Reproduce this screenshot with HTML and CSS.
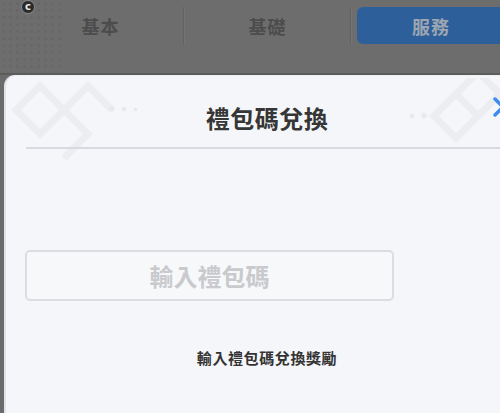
FILE: index.html
```html
<!DOCTYPE html>
<html lang="zh-Hant">
<head>
<meta charset="utf-8">
<link rel="stylesheet" href="styles.css">
</head>
<body>
<div class="screen">
  <div class="topbar">
    <span class="badge">c</span>
    <div class="tabs">
      <div class="tab">基本</div>
      <div class="sep"></div>
      <div class="tab">基礎</div>
      <div class="sep"></div>
      <div class="tab active">服務</div>
    </div>
  </div>
  <div class="modal">
    <svg class="deco deco-left" width="140" height="80" viewBox="0 0 140 80">
      <g fill="none" stroke="#ebedf1" stroke-width="7">
        <path d="M6 30 L30 6 L54 30 L30 54 Z"/>
        <path d="M30 54 L54 30 L78 54 L54 78"/>
        <path d="M54 30 L78 6 L102 30"/>
      </g>
      <g fill="#e6e8ec">
        <rect x="100" y="26" width="5" height="5" transform="rotate(45 102 28)"/>
        <rect x="112" y="27" width="4" height="4" transform="rotate(45 114 29)"/>
        <rect x="124" y="28" width="3" height="3"/>
      </g>
    </svg>
    <svg class="deco deco-right" width="120" height="70" viewBox="0 0 120 70">
      <g fill="#e8eaee">
        <rect x="6" y="36" width="4" height="4"/>
        <rect x="18" y="35" width="5" height="5" transform="rotate(45 20 37)"/>
      </g>
      <g fill="none" stroke="#ebedf1" stroke-width="7">
        <path d="M30 38 L52 16 L74 38 L52 60 Z"/>
        <path d="M52 16 L74 -6 L96 16"/>
        <path d="M74 38 L96 16 L118 38"/>
      </g>
    </svg>
    <svg class="close" width="22" height="22" viewBox="0 0 22 22">
      <path d="M3 3 L19 19 M19 3 L3 19" stroke="#3d8bef" stroke-width="3.4" stroke-linecap="round"/>
    </svg>
    <div class="modal-head">
      <h1 class="title">禮包碼兌換</h1>
    </div>
    <div class="modal-body">
      <div class="code-input">輸入禮包碼</div>
      <p class="hint">輸入禮包碼兌換獎勵</p>
    </div>
  </div>
</div>
</body>
</html>
```
FILE: styles.css
```css
* { box-sizing: border-box; }
html, body {
  margin: 0;
  padding: 0;
}
body {
  width: 500px;
  height: 413px;
  overflow: hidden;
  background: #6b6b6b;
  font-family: "Noto Sans CJK TC", "Noto Sans", sans-serif;
}
.screen {
  width: 500px;
  height: 413px;
  display: flex;
  flex-direction: column;
  overflow: hidden;
}
.topbar {
  position: relative;
  height: 75px;
  flex: none;
  background-color: #6d6d6d;
  background-image: radial-gradient(circle, rgba(96,96,96,0.45) 1.2px, transparent 1.6px);
  background-size: 7px 7px;
  background-repeat: repeat;
  border-bottom: 2px solid #5c5c5c;
}
.topbar::after {
  content: "";
  position: absolute;
  left: 64px;
  right: 0;
  top: 0;
  bottom: 0;
  background: #6d6d6d;
  pointer-events: none;
  z-index: 0;
}
.badge {
  position: absolute;
  left: 21px;
  top: 0;
  width: 14px;
  height: 14px;
  border-radius: 50%;
  background: #2a2a2a;
  border: 1px solid #8a8a8a;
  color: #e8e8e8;
  font-family: "DejaVu Sans", sans-serif;
  font-weight: bold;
  font-size: 10px;
  line-height: 12px;
  text-align: center;
  z-index: 2;
}
.tabs {
  position: relative;
  z-index: 1;
  display: flex;
  align-items: center;
  padding-left: 18px;
  padding-top: 7px;
  height: 44px;
  width: max-content;
}
.tab {
  flex: none;
  width: 165px;
  height: 37px;
  display: flex;
  align-items: center;
  justify-content: center;
  font-size: 18px;
  font-weight: 700;
  color: #4c4c4c;
  letter-spacing: 1px;
}
.sep {
  flex: none;
  width: 2px;
  height: 37px;
  background: #626262;
  border-right: 1px solid #747474;
}
.tab.active {
  margin-left: 5px;
  width: 148px;
  background: #2d5f9b;
  border-radius: 6px;
  color: #9ca5b0;
}
.modal {
  position: relative;
  flex: 1;
  margin-left: 4px;
  width: 524px;
  background: #f5f6f9;
  border-radius: 11px 0 0 0;
  border-left: 2px solid #e2e3e7;
  border-top: 1px solid #eeeff2;
}
.deco {
  position: absolute;
  pointer-events: none;
}
.deco-left { left: 4px; top: 4px; }
.deco-right { left: 398px; top: 2px; }
.close {
  position: absolute;
  left: 486px;
  top: 20px;
}
.modal-head {
  position: relative;
  margin: 0 20px;
  height: 73px;
  border-bottom: 2px solid #d9dadf;
  display: flex;
  justify-content: center;
  padding-top: 27px;
}
.title {
  margin: 0;
  font-size: 24px;
  line-height: 30px;
  font-weight: 700;
  color: #363636;
  letter-spacing: 0.5px;
}
.modal-body {
  display: flex;
  flex-direction: column;
  padding-top: 101px;
}
.code-input {
  margin-left: 19px;
  width: 369px;
  height: 51px;
  border: 2px solid #dcdde1;
  border-radius: 5px;
  background: #f7f8fa;
  display: flex;
  align-items: center;
  justify-content: center;
  font-size: 24px;
  font-weight: 700;
  color: #c9cacd;
}
.hint {
  margin: 48px 0 0;
  text-align: center;
  font-size: 15px;
  line-height: 18px;
  font-weight: 700;
  color: #333;
  letter-spacing: 0.6px;
}
```
